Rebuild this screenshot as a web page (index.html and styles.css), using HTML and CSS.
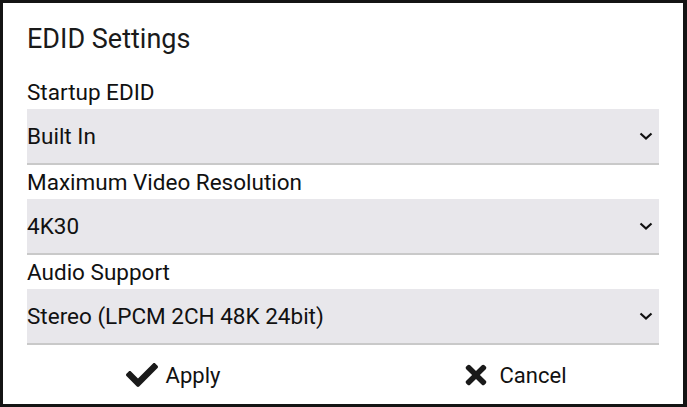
FILE: index.html
```html
<!DOCTYPE html>
<html lang="en">
<head>
    <meta charset="UTF-8">
    <meta name="viewport" content="width=device-width, initial-scale=1.0">
    <title>EDID Settings</title>
    <link rel="stylesheet" href="styles.css">
</head>
<body>
    <div class="dialog">
        <h2 class="dialog-title">EDID Settings</h2>

        <label class="field-label" for="startup-edid">Startup EDID</label>
        <div class="select-wrap">
            <select id="startup-edid" class="select">
                <option>Built In</option>
                <option>Custom</option>
            </select>
            <svg class="chevron" width="14" height="8" viewBox="0 0 14 8"><path d="M1.5 1.5 7 6.5 12.5 1.5" fill="none" stroke="#111" stroke-width="2.2"/></svg>
        </div>

        <label class="field-label" for="max-res">Maximum Video Resolution</label>
        <div class="select-wrap">
            <select id="max-res" class="select">
                <option>4K30</option>
                <option>4K60</option>
                <option>1080P</option>
            </select>
            <svg class="chevron" width="14" height="8" viewBox="0 0 14 8"><path d="M1.5 1.5 7 6.5 12.5 1.5" fill="none" stroke="#111" stroke-width="2.2"/></svg>
        </div>

        <label class="field-label" for="audio">Audio Support</label>
        <div class="select-wrap">
            <select id="audio" class="select">
                <option>Stereo (LPCM 2CH 48K 24bit)</option>
                <option>Multichannel</option>
            </select>
            <svg class="chevron" width="14" height="8" viewBox="0 0 14 8"><path d="M1.5 1.5 7 6.5 12.5 1.5" fill="none" stroke="#111" stroke-width="2.2"/></svg>
        </div>

        <div class="actions">
            <button class="action-btn" id="apply-btn">
                <span class="icon">
                    <svg width="32" height="32" viewBox="0 0 512 512"><path fill="#1a1a1a" d="M173.9 439.4l-166.4-166.4c-10-10-10-26.2 0-36.2l36.2-36.2c10-10 26.2-10 36.2 0L192 312.7 432.1 72.6c10-10 26.2-10 36.2 0l36.2 36.2c10 10 10 26.2 0 36.2l-294.4 294.4c-10 10-26.2 10-36.2 0z"/></svg>
                </span>
                Apply
            </button>
            <button class="action-btn" id="cancel-btn">
                <span class="icon">
                    <svg width="30" height="30" viewBox="0 0 512 512"><g transform="translate(80 0)"><path fill="#1a1a1a" d="M242.72 256l100.07-100.07c12.28-12.28 12.28-32.19 0-44.480l-22.24-22.24c-12.28-12.28-32.19-12.28-44.48 0L176 189.28 75.93 89.21c-12.28-12.28-32.19-12.28-44.48 0L9.21 111.45c-12.28 12.28-12.28 32.19 0 44.48L109.28 256 9.21 356.07c-12.28 12.28-12.28 32.19 0 44.48l22.24 22.24c12.28 12.28 32.2 12.28 44.48 0L176 322.72l100.07 100.07c12.28 12.28 32.2 12.28 44.48 0l22.240-22.24c12.28-12.28 12.28-32.19 0-44.48L242.72 256z"/></g></svg>
                </span>
                Cancel
            </button>
        </div>
    </div>
</body>
</html>
```

FILE: styles.css
```css
body {
    margin: 0;
    background-color: #141414;
    font-family: Roboto, 'Noto Sans', sans-serif;
    color: #111;
}
.dialog {
    background-color: white;
    margin: 3px 4px 3px 3px;
    padding: 0 24px;
    height: 401px;
    box-sizing: border-box;
}
.dialog-title {
    margin: 0;
    font-size: 27px;
    font-weight: 400;
    line-height: 72px;
    color: #1a1a1a;
}
.field-label {
    display: block;
    font-size: 22.5px;
    line-height: 34px;
}
.select-wrap {
    position: relative;
}
.select {
    display: block;
    width: 100%;
    height: 56px;
    margin: 0;
    padding: 0;
    border: none;
    border-bottom: 2px solid #c9c9c9;
    border-radius: 0;
    background-color: #e8e7eb;
    font-family: inherit;
    font-size: 22.5px;
    color: #111;
    appearance: none;
    -webkit-appearance: none;
    outline: none;
}
.chevron {
    position: absolute;
    right: 6px;
    top: 23px;
    pointer-events: none;
}
.actions {
    display: flex;
    margin: 0 -24px;
}
.action-btn {
    flex: 1;
    display: flex;
    align-items: center;
    justify-content: center;
    gap: 8px;
    height: 60px;
    padding: 0;
    border: none;
    background: none;
    font-family: inherit;
    font-size: 22px;
    color: #111;
    cursor: pointer;
}
.icon {
    display: flex;
    align-items: center;
    justify-content: center;
    width: 32px;
    height: 32px;
}
```
